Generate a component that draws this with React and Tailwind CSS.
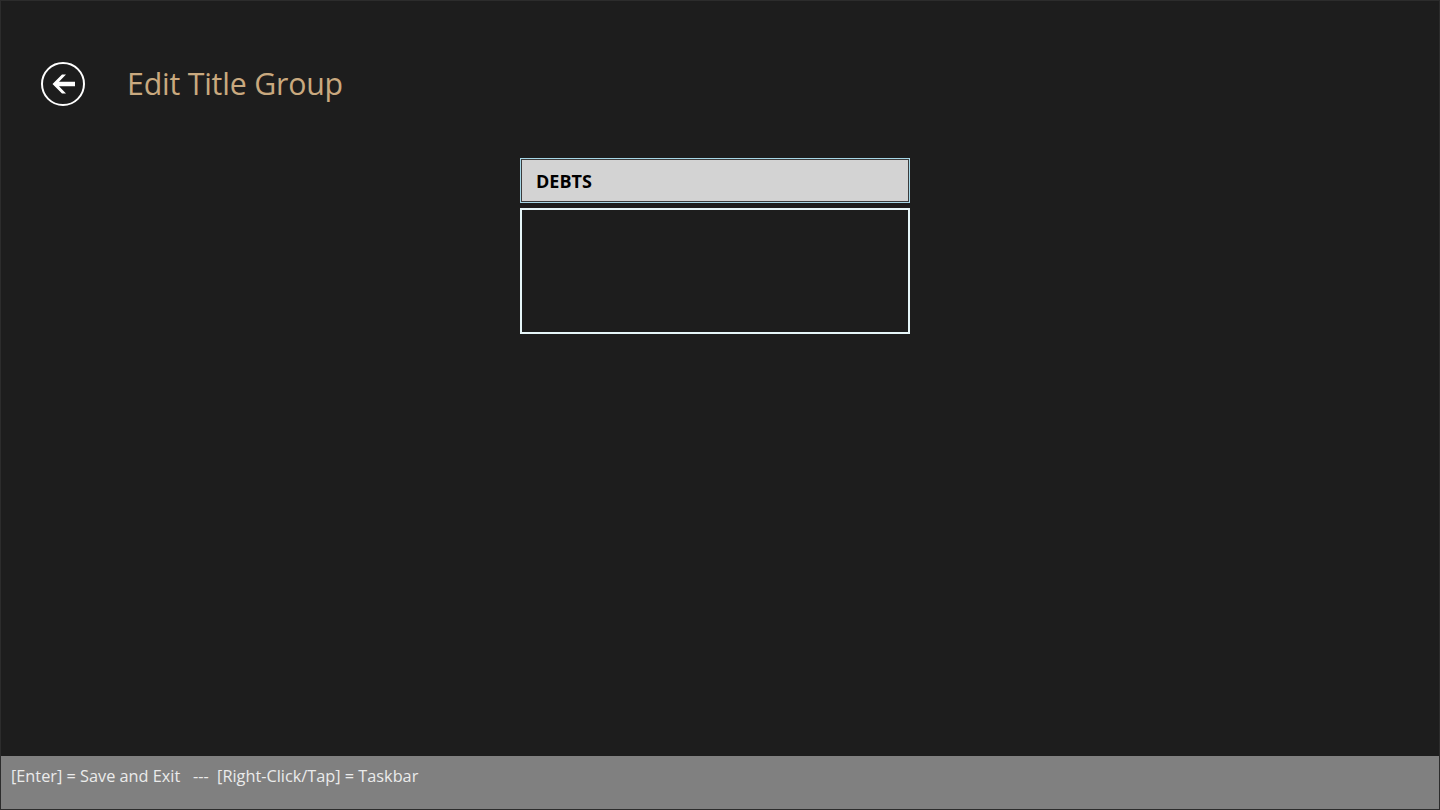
import React from 'react'

function BackIcon() {
  return (
    <svg width="46" height="46" viewBox="0 0 46 46">
      <circle cx="23" cy="23" r="21" fill="none" stroke="#ffffff" strokeWidth="2" />
      <path d="M12.5 23 L22 13.5 L26 13.5 L19 20.8 L35 20.8 L35 25.2 L19 25.2 L26 32.5 L22 32.5 Z" fill="#ffffff" />
    </svg>
  )
}

export default function App() {
  return (
    <div className="w-[1440px] h-[810px] bg-[#1d1d1d] border border-[#2c2c2c] flex flex-col overflow-hidden" style={{ fontFamily: '"Open Sans", "Noto Sans", sans-serif' }}>
      <div className="flex-1 flex flex-col">
        <div className="flex items-center h-[46px] mt-[60px] ml-[39px]">
          <BackIcon />
          <h1 className="ml-[41px] text-[30.3px] leading-none text-[#c9a97f] tracking-[-0.2px]">Edit Title Group</h1>
        </div>

        <div className="flex flex-col items-start mt-[51px] ml-[519px]">
          <div className="w-[390px] h-[45px] border border-[#a6d6e6]">
            <div className="w-full h-full border border-[#3a3a3a] bg-[#d3d3d3] flex items-center pl-[14px]">
              <span className="text-[18px] font-bold text-black leading-none">DEBTS</span>
            </div>
          </div>
          <div className="w-[390px] h-[126px] mt-[5px] border-2 border-[#e6f6f8] bg-[#1d1d1d]" />
        </div>
      </div>

      <div className="h-[53px] bg-[#808080] flex items-start pt-[8px] pl-[10px]">
        <span className="text-[16.3px] text-[#ebebeb] whitespace-pre">[Enter] = Save and Exit   ---  [Right-Click/Tap] = Taskbar</span>
      </div>
    </div>
  )
}
